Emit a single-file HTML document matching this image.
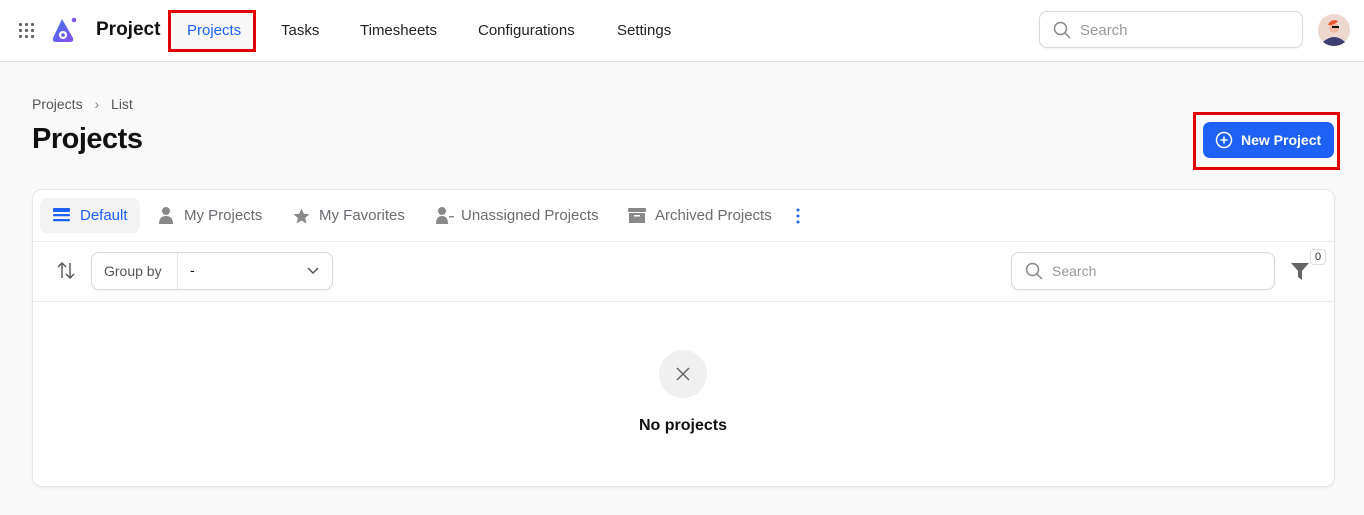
<!DOCTYPE html>
<html><head><meta charset="utf-8"><style>
*{box-sizing:border-box;margin:0;padding:0}
body{width:1364px;height:515px;background:#f9f9f9;font-family:"Liberation Sans",sans-serif;position:relative;overflow:hidden;color:#111}
.abs{position:absolute}
.top{left:0;top:0;width:1364px;height:62px;background:#fff;border-bottom:1px solid #e2e2e2}
.nav{font-size:15px;color:#222;top:22px}
.card{left:32px;top:189px;width:1303px;height:298px;background:#fff;border:1px solid #e6e6e6;border-radius:10px;box-shadow:0 1px 2px rgba(0,0,0,.06)}
.tab{top:207px;font-size:15px;color:#6b6b72}
.inp{border:1px solid #d9d9d9;border-radius:8px;background:#fff;box-shadow:0 1px 2px rgba(0,0,0,.06)}
</style></head><body>
<div class="abs top"></div>
<svg class="abs" style="left:18px;top:22px" width="17" height="17" viewBox="0 0 17 17" fill="#666"><g><circle cx="2.5" cy="2.5" r="1.6"/><circle cx="8.5" cy="2.5" r="1.6"/><circle cx="14.5" cy="2.5" r="1.6"/><circle cx="2.5" cy="8.5" r="1.6"/><circle cx="8.5" cy="8.5" r="1.6"/><circle cx="14.5" cy="8.5" r="1.6"/><circle cx="2.5" cy="14.5" r="1.6"/><circle cx="8.5" cy="14.5" r="1.6"/><circle cx="14.5" cy="14.5" r="1.6"/></g></svg>
<svg class="abs" style="left:50px;top:16px" width="28" height="28" viewBox="0 0 28 28"><defs><linearGradient id="g" x1="0" y1="0" x2="1" y2="1"><stop offset="0" stop-color="#3b7bf6"/><stop offset="1" stop-color="#8a4ce8"/></linearGradient></defs><path d="M12 3 L3 22 Q2 26 6 26 L20 26 Q24 26 23 22 Z" fill="url(#g)"/><circle cx="13" cy="19" r="4" fill="#fff"/><circle cx="13" cy="19" r="1.8" fill="#5b5ef0"/><circle cx="24" cy="4" r="2.3" fill="#7a55ea"/></svg>
<div class="abs" style="left:96px;top:19px;font-size:19px;font-weight:bold">Project</div>
<div class="abs" style="left:168px;top:10px;width:88px;height:42px;border:3px solid #e50000;background:#f7f7f7"></div>
<div class="abs nav" style="left:187px;color:#1e62f5">Projects</div>
<div class="abs nav" style="left:281px">Tasks</div>
<div class="abs nav" style="left:360px">Timesheets</div>
<div class="abs nav" style="left:478px">Configurations</div>
<div class="abs nav" style="left:617px">Settings</div>
<div class="abs inp" style="left:1039px;top:11px;width:264px;height:37px"></div>
<svg class="abs" style="left:1053px;top:21px" width="18" height="18" viewBox="0 0 18 18" fill="none" stroke="#888" stroke-width="1.5"><circle cx="7.5" cy="7.5" r="6"/><path d="M12 12l5 5"/></svg>
<div class="abs" style="left:1080px;top:22px;font-size:15px;color:#999">Search</div>
<svg class="abs" style="left:1318px;top:14px" width="32" height="32" viewBox="0 0 32 32"><circle cx="16" cy="16" r="16" fill="#ecd8cf"/><path d="M5 28 Q16 18 27 28 Q22 32 16 32 Q10 32 5 28Z" fill="#3d3f73"/><circle cx="16" cy="14" r="5" fill="#f2b9a0"/><path d="M10 11 Q13 4 20 7 Q18 10 13 11Z" fill="#e8572f"/><rect x="14" y="12" width="7" height="2" fill="#111"/></svg>
<div class="abs" style="left:32px;top:96px;font-size:14px;color:#555">Projects <span style="margin:0 8px;color:#888">›</span> List</div>
<div class="abs" style="left:32px;top:123px;font-size:29px;font-weight:bold;letter-spacing:-.5px">Projects</div>
<div class="abs" style="left:1193px;top:112px;width:147px;height:58px;border:3px solid #e50000"></div>
<div class="abs" style="left:1203px;top:122px;width:131px;height:36px;background:#1e62f5;border-radius:7px"></div>
<svg class="abs" style="left:1215px;top:131px" width="18" height="18" viewBox="0 0 18 18" fill="none" stroke="#fff" stroke-width="1.5"><circle cx="9" cy="9" r="7.5"/><path d="M9 5.5v7M5.5 9h7"/></svg>
<div class="abs" style="left:1241px;top:132px;font-size:14px;color:#fff;font-weight:bold">New Project</div>
<div class="abs card"></div>
<div class="abs" style="left:40px;top:198px;width:100px;height:35px;background:#f3f3f3;border-radius:7px"></div>
<svg class="abs" style="left:53px;top:208px" width="17" height="15" viewBox="0 0 17 15" fill="#1e62f5"><rect y="0" width="17" height="4" rx="1"/><rect y="6" width="17" height="2.2" rx="1"/><rect y="11" width="17" height="2.2" rx="1"/></svg>
<div class="abs tab" style="left:80px;color:#1e62f5">Default</div>
<svg class="abs" style="left:159px;top:207px" width="14" height="17" viewBox="0 0 14 17" fill="#888"><circle cx="7" cy="4" r="4"/><path d="M0 17 Q0 9 7 9 Q14 9 14 17Z"/></svg>
<div class="abs tab" style="left:184px">My Projects</div>
<svg class="abs" style="left:292px;top:207px" width="19" height="18" viewBox="0 0 24 24" fill="#888"><path d="M12 2l3 7 7.5.6-5.7 5 1.8 7.4L12 18l-6.6 4 1.8-7.4-5.7-5L9 9z"/></svg>
<div class="abs tab" style="left:319px">My Favorites</div>
<svg class="abs" style="left:436px;top:207px" width="18" height="17" viewBox="0 0 18 17" fill="#888"><circle cx="6" cy="4" r="4"/><path d="M0 17 Q0 9 6 9 Q12 9 12 17Z"/><rect x="13" y="9" width="5" height="1.5"/></svg>
<div class="abs tab" style="left:461px">Unassigned Projects</div>
<svg class="abs" style="left:628px;top:208px" width="18" height="16" viewBox="0 0 18 16" fill="#888"><rect width="18" height="4" rx="1"/><path d="M1 5h16v10H1z"/><rect x="6" y="7" width="6" height="1.5" fill="#fff"/></svg>
<div class="abs tab" style="left:655px">Archived Projects</div>
<svg class="abs" style="left:796px;top:208px" width="4" height="16" fill="#1e62f5"><circle cx="2" cy="2" r="1.5"/><circle cx="2" cy="8" r="1.5"/><circle cx="2" cy="14" r="1.5"/></svg>
<div class="abs" style="left:33px;top:241px;width:1301px;height:1px;background:#ececec"></div>
<svg class="abs" style="left:57px;top:262px" width="18" height="17" viewBox="0 0 18 17" fill="none" stroke="#555" stroke-width="1.4"><path d="M5 16V1M1 5l4-4 4 4M13 1v15M9 12l4 4 4-4"/></svg>
<div class="abs inp" style="left:91px;top:252px;width:242px;height:38px"></div>
<div class="abs" style="left:177px;top:253px;width:1px;height:36px;background:#e2e2e2"></div>
<div class="abs" style="left:104px;top:263px;font-size:14px;color:#555">Group by</div>
<div class="abs" style="left:190px;top:262px;font-size:14px">-</div>
<svg class="abs" style="left:307px;top:267px" width="12" height="8" fill="none" stroke="#555" stroke-width="1.5"><path d="M1 1l5 5 5-5"/></svg>
<div class="abs inp" style="left:1011px;top:252px;width:264px;height:38px"></div>
<svg class="abs" style="left:1025px;top:262px" width="18" height="18" viewBox="0 0 18 18" fill="none" stroke="#888" stroke-width="1.5"><circle cx="7.5" cy="7.5" r="6"/><path d="M12 12l5 5"/></svg>
<div class="abs" style="left:1052px;top:263px;font-size:14px;color:#999">Search</div>
<svg class="abs" style="left:1291px;top:262px" width="18" height="18" viewBox="0 0 18 18" fill="#666"><path d="M0 1h18l-7 8v9l-4-3V9z"/></svg>
<div class="abs" style="left:1310px;top:249px;width:16px;height:16px;border:1px solid #ddd;border-radius:4px;background:#fff;font-size:11px;text-align:center;line-height:14px;color:#333">0</div>
<div class="abs" style="left:33px;top:301px;width:1301px;height:1px;background:#ececec"></div>
<div class="abs" style="left:659px;top:350px;width:48px;height:48px;border-radius:50%;background:#f0f0f0"></div>
<svg class="abs" style="left:676px;top:367px" width="14" height="14" fill="none" stroke="#666" stroke-width="1.5"><path d="M1 1l12 12M13 1L1 13"/></svg>
<div class="abs" style="left:0;width:1364px;text-align:center;top:417px;font-size:16px;font-weight:bold;padding-left:2px">No projects</div>
</body></html>
